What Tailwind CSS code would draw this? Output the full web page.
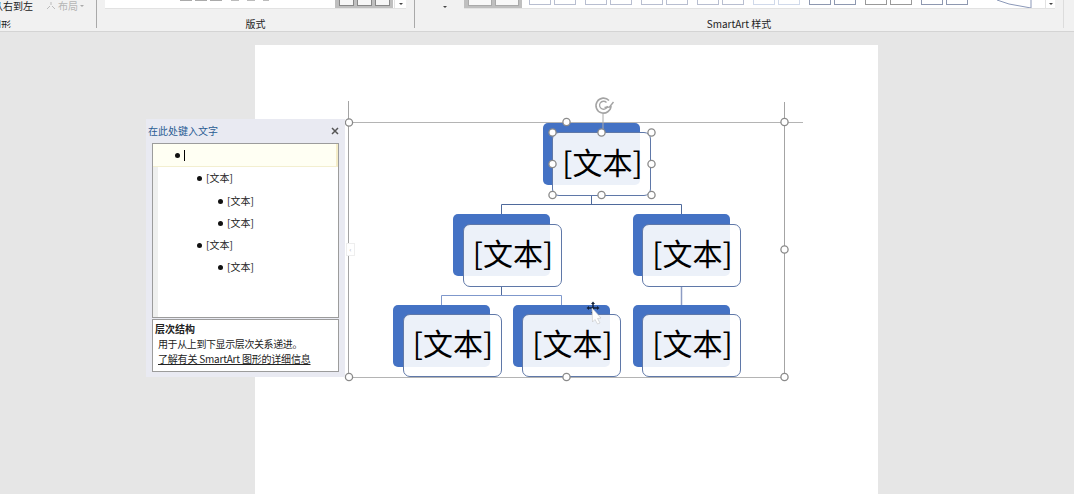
<!doctype html>
<html lang="zh">
<head>
<meta charset="utf-8">
<script src="https://cdn.jsdelivr.net/npm/@tailwindcss/browser@4"></script>
</head>
<body class="bg-[#e6e6e6]">
<div class="relative w-[1074px] h-[494px] overflow-hidden bg-[#e6e6e6] font-['Noto_Sans_CJK_SC','Noto_Sans',sans-serif] text-[#222]">

  <!-- Ribbon -->
  <header class="flex h-[32px] bg-[#f1f1f1] border-b border-[#d4d4d4]">
    <section class="w-[97px] shrink-0 border-r border-[#a9a9a9] h-[28px] flex flex-col overflow-hidden text-[10px] leading-[14px]">
      <div class="flex items-center h-[10px] mt-[1px] -ml-[7px] whitespace-nowrap">
        <span>从右到左</span>
        <svg class="ml-[13px]" width="10" height="10" viewBox="0 0 10 10"><path d="M5 1v3M1 8l3-3M9 8L6 5" stroke="#bbb" fill="none"/></svg>
        <span class="ml-[2px] text-[#b5b5b5]">布局</span>
        <span class="ml-[2px] w-0 h-0 border-x-[2px] border-x-transparent border-t-[2px] border-t-[#aaa]"></span>
      </div>
      <div class="mt-[7px] -ml-[9px]">图形</div>
    </section>

    <section class="w-[318px] shrink-0 border-r border-[#a9a9a9] h-[28px] flex flex-col relative">
      <div class="flex h-[9px] ml-[8px] w-[301px] bg-white border-b border-[#e2e2e2]">
        <div class="flex-1 flex justify-center gap-[3px] pl-[8px]">
          <i class="block w-[12px] h-[1px] bg-[#aaa]"></i><i class="block w-[12px] h-[1px] bg-[#aaa]"></i><i class="block w-[12px] h-[1px] bg-[#aaa]"></i><i class="block w-[8px] h-[1px] ml-[6px] bg-[#bbb]"></i><i class="block w-[8px] h-[1px] ml-[5px] bg-[#bbb]"></i><i class="block w-[6px] h-[1px] ml-[5px] bg-[#bbb]"></i>
        </div>
        <div class="w-[58px] h-[8px] bg-[#bfbfbf] flex justify-center gap-[3px] mr-[1px]">
          <i class="block w-[15px] h-[6px] bg-[#f6f6f6] border-x border-b border-[#888]"></i><i class="block w-[15px] h-[6px] bg-[#f6f6f6] border-x border-b border-[#888]"></i><i class="block w-[15px] h-[6px] bg-[#f6f6f6] border-x border-b border-[#888]"></i>
        </div>
        <div class="w-[12px] border-l border-[#e2e2e2] flex justify-center pt-[3px]"><span class="w-0 h-0 border-x-[2px] border-x-transparent border-t-[2px] border-t-[#444]"></span></div>
      </div>
      <div class="text-center text-[10px] leading-[14px] mt-[8px]">版式</div>
    </section>

    <section class="flex-1 relative">
      <span class="absolute left-[28px] top-[6px] w-0 h-0 border-x-[2px] border-x-transparent border-t-[2px] border-t-[#444]"></span>
      <div class="flex h-[9px] ml-[49px] w-[591px] bg-white border-b border-[#e2e2e2]">
        <div class="w-[58px] h-[8px] bg-[#bfbfbf] flex justify-center gap-[3px] shrink-0">
          <i class="block w-[24px] h-[6px] bg-[#f8f8f8] border-x border-b border-[#aaa]"></i><i class="block w-[24px] h-[6px] bg-[#f8f8f8] border-x border-b border-[#aaa]"></i>
        </div>
        <div class="flex pl-[7px] gap-[9px]">
          <div class="flex gap-[3px]"><i class="block w-[22px] h-[5px] border-x border-b border-[#b8bed0]"></i><i class="block w-[22px] h-[5px] border-x border-b border-[#b8bed0]"></i></div>
          <div class="flex gap-[3px]"><i class="block w-[22px] h-[5px] border-x border-b border-[#b8bed0]"></i><i class="block w-[22px] h-[5px] border-x border-b border-[#b8bed0]"></i></div>
          <div class="flex gap-[3px]"><i class="block w-[22px] h-[5px] border-x border-b border-[#b8bed0]"></i><i class="block w-[22px] h-[5px] border-x border-b border-[#b8bed0]"></i></div>
          <div class="flex gap-[3px]"><i class="block w-[22px] h-[5px] border-x border-b border-[#b8bed0]"></i><i class="block w-[22px] h-[5px] border-x border-b border-[#b8bed0]"></i></div>
          <div class="flex gap-[3px]"><i class="block w-[22px] h-[5px] border-x border-b border-[#d0d9ea]"></i><i class="block w-[22px] h-[5px] border-x border-b border-[#d0d9ea]"></i></div>
          <div class="flex gap-[3px]"><i class="block w-[22px] h-[5px] border-x border-b border-[#8e98b0]"></i><i class="block w-[22px] h-[5px] border-x border-b border-[#8e98b0]"></i></div>
          <div class="flex gap-[3px]"><i class="block w-[22px] h-[5px] border-x border-b border-[#999]"></i><i class="block w-[22px] h-[5px] border-x border-b border-[#999]"></i></div>
          <div class="flex gap-[3px]"><i class="block w-[22px] h-[5px] border-x border-b border-[#8e98b0]"></i><i class="block w-[22px] h-[5px] border-x border-b border-[#8e98b0]"></i></div>
        </div>
        <svg class="ml-[29px] shrink-0" width="37" height="8" viewBox="0 0 37 8"><path d="M0 0l12 4 22 4V0" fill="none" stroke="#8b98b8"/></svg>
        <div class="ml-auto w-[10px] border-l border-[#e2e2e2] flex justify-center pt-[3px]"><span class="w-0 h-0 border-x-[2px] border-x-transparent border-t-[2px] border-t-[#444]"></span></div>
      </div>
      <div class="w-[648px] text-center text-[10px] leading-[14px] mt-[8px]">SmartArt 样式</div>
      <div class="absolute left-[648px] top-0 h-[28px] border-l border-[#dcdcdc]"></div>
    </section>
  </header>

  <!-- Document page -->
  <main class="mt-[13px] ml-[255px] w-[623px] h-[449px] bg-white"></main>

  <!-- Free canvas: SmartArt diagram -->
  <svg class="absolute left-0 top-0" width="1074" height="494" viewBox="0 0 1074 494" fill="none">
    <g stroke="#b4b4b4"><path d="M349 122.500H803M349 377.500H785"/></g>
    <g stroke="#a4a4a4"><path d="M348.500 101V377M784.500 102V377"/></g>
  </svg>

  <div class="absolute left-[543px] top-[123px] w-[97px] h-[62px] rounded-[5px] bg-[#4472c4]"></div>
  <div class="absolute left-[453px] top-[214px] w-[97px] h-[62px] rounded-[5px] bg-[#4472c4]"></div>
  <div class="absolute left-[633px] top-[214px] w-[97px] h-[62px] rounded-[5px] bg-[#4472c4]"></div>
  <div class="absolute left-[393px] top-[305px] w-[97px] h-[62px] rounded-[5px] bg-[#4472c4]"></div>
  <div class="absolute left-[513px] top-[305px] w-[97px] h-[62px] rounded-[5px] bg-[#4472c4]"></div>
  <div class="absolute left-[633px] top-[305px] w-[97px] h-[62px] rounded-[5px] bg-[#4472c4]"></div>

  <svg class="absolute left-0 top-0" width="1074" height="494" viewBox="0 0 1074 494" fill="none">
    <path d="M591.500 195V204.500M501.500 214V204.500H681.500V214" stroke="#4f6a9c"/>
    <path d="M501.500 286V295" stroke="#4f6a9c"/>
    <path d="M441.500 305V295.500H561.500V305" stroke="#7f98cc"/>
    <path d="M681.500 286V305" stroke="#8d9cc4" stroke-width="1.500"/>
  </svg>

  <div class="absolute left-[552px] top-[132px] w-[99px] h-[64px] rounded-[7px] bg-white/90 border border-[#5f78a8] flex items-center justify-center text-[30px] font-normal leading-none text-black pb-[7px] pl-[2px]">[文本]</div>
  <div class="absolute left-[463px] top-[224px] w-[99px] h-[63px] rounded-[7px] bg-white/90 border border-[#5f78a8] flex items-center justify-center text-[30px] font-normal leading-none text-black pb-[7px] pl-[1px]">[文本]</div>
  <div class="absolute left-[642px] top-[224px] w-[99px] h-[63px] rounded-[7px] bg-white/90 border border-[#5f78a8] flex items-center justify-center text-[30px] font-normal leading-none text-black pb-[7px] pl-[2px]">[文本]</div>
  <div class="absolute left-[403px] top-[314px] w-[99px] h-[63px] rounded-[7px] bg-white/90 border border-[#5f78a8] flex items-center justify-center text-[30px] font-normal leading-none text-black pb-[7px] pl-[1px]">[文本]</div>
  <div class="absolute left-[522px] top-[314px] w-[99px] h-[63px] rounded-[7px] bg-white/90 border border-[#5f78a8] flex items-center justify-center text-[30px] font-normal leading-none text-black pb-[7px] pl-[2px]">[文本]</div>
  <div class="absolute left-[642px] top-[314px] w-[99px] h-[63px] rounded-[7px] bg-white/90 border border-[#5f78a8] flex items-center justify-center text-[30px] font-normal leading-none text-black pb-[7px] pl-[2px]">[文本]</div>

  <!-- Handles, rotation grip, cursor -->
  <svg class="absolute left-0 top-0" width="1074" height="494" viewBox="0 0 1074 494" fill="none">
    <path d="M603 113V132" stroke="#aaa"/>
    <path d="M609 100.500A7.500 7.500 0 1 0 611 106" stroke="#a4a4a4" stroke-width="1.600"/>
    <path d="M606.500 102.500A4 4 0 1 0 607.500 106" stroke="#a4a4a4" stroke-width="1.300"/>
    <path d="M604.500 107.500L609.500 107 613.500 102" stroke="#a4a4a4" stroke-width="1.400"/>
    <g fill="#fff" stroke="#8a8a8a" stroke-width="1.300">
      <circle cx="349" cy="122.500" r="3.600"/><circle cx="784.500" cy="122" r="3.600"/>
      <circle cx="784.500" cy="249.500" r="3.600"/><circle cx="349" cy="377" r="3.600"/>
      <circle cx="566.500" cy="377" r="3.600"/><circle cx="784.500" cy="377" r="3.600"/>
      <circle cx="566.500" cy="122" r="3.600"/>
      <circle cx="552.500" cy="132.500" r="3.600"/><circle cx="601.500" cy="132.500" r="3.600"/><circle cx="651.500" cy="132.500" r="3.600"/>
      <circle cx="552.500" cy="164" r="3.600"/><circle cx="651.500" cy="164" r="3.600"/>
      <circle cx="552.500" cy="195" r="3.600"/><circle cx="601.500" cy="195" r="3.600"/><circle cx="651.500" cy="195" r="3.600"/>
    </g>
    <path d="M593 303V313M588 308H598" stroke="#10203a" stroke-width="1.500"/>
    <path d="M593 301.500l-2 2.500h4zM593 314.500l-2-2.500h4zM586.500 308l2.500-2v4zM599.500 308l-2.500-2v4z" fill="#10203a"/>
    <path d="M592 308L601 318 597.500 318.500 600 323 597.500 324 595 319.500 592.500 322z" fill="#fff" stroke="#c4c4c4" stroke-width=".6"/>
  </svg>
  <div class="absolute left-[346px] top-[243px] w-[9px] h-[13px] bg-white border border-[#eee] text-[6px] leading-[11px] text-center text-[#aaa]">‹</div>

  <!-- Text pane -->
  <aside class="absolute left-[146px] top-[119px] w-[199px] h-[258px] bg-[#e9eaf2] flex flex-col px-[6px]">
    <div class="h-[24px] flex items-center justify-between -ml-[4px]">
      <h1 class="text-[10px] leading-none text-[#2a5c94]">在此处键入文字</h1>
      <svg width="8" height="8" viewBox="0 0 8 8"><path d="M1 1l6 6M7 1L1 7" stroke="#555" stroke-width="1.500"/></svg>
    </div>
    <div class="w-[187px] h-[175px] bg-white border border-[#9c9c9c] flex text-[10px] text-[#222]">
      <div class="w-full relative">
        <div class="absolute left-0 top-[23px] bottom-0 w-[5px] bg-[#eff0ef]"></div>
        <div class="h-[23px] bg-[#fffff3] border-b border-[#f3efd0] border-r-2 border-r-[#f5edc8] flex items-center pl-[22px] pt-[1px]">
          <i class="block w-[5px] h-[5px] rounded-full bg-[#111]"></i>
          <i class="block ml-[4px] w-[1px] h-[11px] bg-black"></i>
        </div>
        <ul class="leading-[22px]">
          <li class="flex items-center h-[22px] pl-[44px] gap-[4px]"><i class="block w-[5px] h-[5px] rounded-full bg-[#111]"></i><span>[文本]</span></li>
          <li class="flex items-center h-[22px] mt-[1px] pl-[65px] gap-[4px]"><i class="block w-[5px] h-[5px] rounded-full bg-[#111]"></i><span>[文本]</span></li>
          <li class="flex items-center h-[22px] pl-[65px] gap-[4px]"><i class="block w-[5px] h-[5px] rounded-full bg-[#111]"></i><span>[文本]</span></li>
          <li class="flex items-center h-[22px] pl-[44px] gap-[4px]"><i class="block w-[5px] h-[5px] rounded-full bg-[#111]"></i><span>[文本]</span></li>
          <li class="flex items-center h-[22px] pl-[65px] gap-[4px]"><i class="block w-[5px] h-[5px] rounded-full bg-[#111]"></i><span>[文本]</span></li>
        </ul>
      </div>
    </div>
    <div class="mt-[1px] w-[187px] h-[53px] bg-white border border-[#9c9c9c] text-[10px] leading-[15px] text-[#222] pl-[2px] pt-[1px]">
      <p class="font-bold">层次结构</p>
      <p class="pl-[3px] whitespace-nowrap tracking-[-0.4px]">用于从上到下显示层次关系递进。</p>
      <p class="pl-[3px] whitespace-nowrap underline tracking-[-0.2px]">了解有关 SmartArt 图形的详细信息</p>
    </div>
  </aside>
</div>
</body>
</html>
